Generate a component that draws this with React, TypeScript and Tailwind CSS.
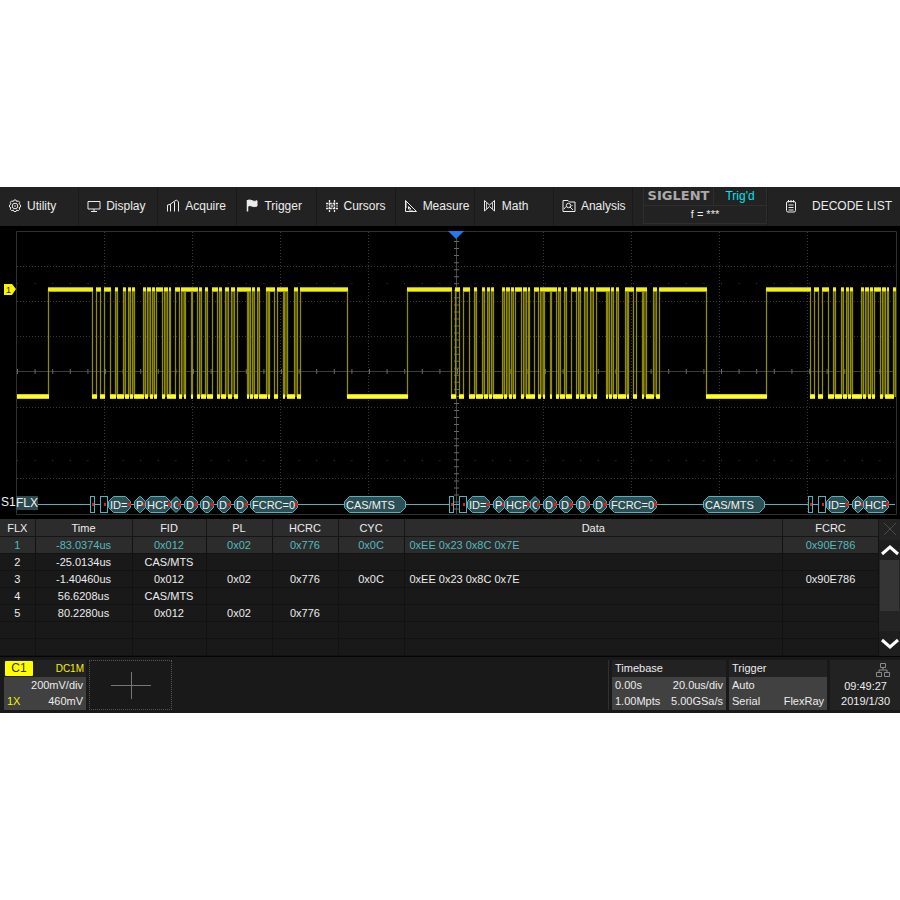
import type { ReactNode } from 'react';

const PERIOD = 359;

// high pulses of one FlexRay frame, as [start, end]
const PULSES: [number, number][] = [
  [48, 92], [96, 100], [104, 110], [115, 117], [123, 125], [128, 130], [132, 134],
  [143, 145], [147, 150], [152, 154], [156, 162], [164, 167], [169, 170], [175, 179],
  [181, 184], [185, 191], [192, 197], [199, 201], [205, 207], [212, 217], [219, 221],
  [225, 228], [231, 234], [237, 247], [248, 250], [252, 254], [257, 259], [266, 268],
  [269, 274], [277, 283], [284, 287], [294, 297], [300, 347],
];

const TRACE_START = 17;
const TRACE_END = 895;
const HIGH = 63;
const LOW = 171;

const TOKENS = [
  { x: 108, w: 23, text: 'ID=', dot: 129 },
  { x: 134, w: 12, text: 'P', dot: 144 },
  { x: 145, w: 26, text: 'HCR', dot: 169 },
  { x: 171, w: 10, text: 'C', dot: 179 },
  { x: 184, w: 14, text: 'D', dot: 196 },
  { x: 200, w: 14, text: 'D', dot: 212 },
  { x: 217, w: 14, text: 'D', dot: 229 },
  { x: 234, w: 14, text: 'D', dot: 246 },
  { x: 250, w: 48, text: 'FCRC=0', dot: 296 },
  { x: 344, w: 62, text: 'CAS/MTS', dot: 0 },
];

const COLUMNS = ['FLX', 'Time', 'FID', 'PL', 'HCRC', 'CYC', 'Data', 'FCRC'];

const ROWS = [
  ['1', '-83.0374us', '0x012', '0x02', '0x776', '0x0C', '0xEE 0x23 0x8C 0x7E', '0x90E786'],
  ['2', '-25.0134us', 'CAS/MTS', '', '', '', '', ''],
  ['3', '-1.40460us', '0x012', '0x02', '0x776', '0x0C', '0xEE 0x23 0x8C 0x7E', '0x90E786'],
  ['4', '56.6208us', 'CAS/MTS', '', '', '', '', ''],
  ['5', '80.2280us', '0x012', '0x02', '0x776', '', '', ''],
  ['', '', '', '', '', '', '', ''],
  ['', '', '', '', '', '', '', ''],
];

function Icon({ children }: { children: ReactNode }) {
  return (
    <svg width="14" height="14" viewBox="0 0 14 14" fill="none" stroke="currentColor" strokeWidth="1" className="shrink-0" aria-hidden="true">
      {children}
    </svg>
  );
}

const MENU = [
  {
    label: 'Utility',
    icon: (
      <Icon>
        <path d="M5.300 2.500L6 1h2l.7 1.500 1.600-.6 1.400 1.400-.6 1.600L12.500 6v2l-1.400.7.6 1.600-1.400 1.400-1.600-.6L8 12.500H6l-.7-1.400-1.600.6-1.400-1.400.6-1.600L1.500 8V6l1.400-1.100-.6-1.600 1.400-1.400z" />
        <circle cx="7" cy="7" r="2.800" />
        <circle cx="7" cy="7" r=".8" fill="currentColor" stroke="none" />
      </Icon>
    ),
  },
  {
    label: 'Display',
    icon: (
      <Icon>
        <path d="M1 2.500h12v7.500H1zM7 10v2.500M4 12.500h6" />
      </Icon>
    ),
  },
  {
    label: 'Acquire',
    icon: (
      <Icon>
        <path d="M1.500 12.500V6M4.500 12.500V5M8.500 12.500V3M12.500 12.500V3M1 6.500L4.500 5 8 2.500l2.500-1.500 2 2" />
      </Icon>
    ),
  },
  {
    label: 'Trigger',
    icon: (
      <Icon>
        <path d="M2.500 1v11.500" strokeWidth="1.500" />
        <path d="M2.500 1.500c1.500-.8 3-.5 4.500.2s3.500.8 5 0v5.300c-1.500.8-3.500.8-5 .1s-3-.6-4.500.2z" fill="currentColor" />
      </Icon>
    ),
  },
  {
    label: 'Cursors',
    icon: (
      <Icon>
        <path d="M4.500 1v12M9.500 1v12" strokeWidth="1.300" strokeDasharray="2.500 .8" />
        <path d="M1 4.500h12M1 9.500h12" strokeWidth="1.300" strokeDasharray="2.500 .8" />
        <path d="M7 5.500v3M1 7h2M11 7h2M5.500 7h3" strokeWidth=".8" />
      </Icon>
    ),
  },
  {
    label: 'Measure',
    icon: (
      <Icon>
        <path d="M1.500 1.500v11h11zM4.500 7.500V10H7zM1.500 4H3M1.500 6H3M1.500 8H3M6 12.500V11M8 12.500V11" />
      </Icon>
    ),
  },
  {
    label: 'Math',
    icon: (
      <Icon>
        <path d="M1.500 12V1.500L6.500 6l5-4.500V12L6.500 7.500z" />
        <path d="M3.500 10V4M9.500 10V4" strokeWidth=".8" />
      </Icon>
    ),
  },
  {
    label: 'Analysis',
    icon: (
      <Icon>
        <path d="M1 1.500h5l1.500 1.500H13V12.500H1z" />
        <circle cx="6.500" cy="6.500" r="2.200" />
        <path d="M8 8l3 3M2 10l2-2.500M9 7.500l1.500-1.500" />
      </Icon>
    ),
  },
];

function Toolbar() {
  return (
    <header className="flex h-[39px] bg-[#222222]">
      <nav className="grid flex-1 grid-cols-8">
        {MENU.map((item) => (
          <button key={item.label} className="flex items-center gap-[5px] border-r border-[#1a1a1a] pl-2 text-[12px]">
            {item.icon}
            {item.label}
          </button>
        ))}
      </nav>
      <div className="flex w-[267px] shrink-0">
        <div className="mb-[2px] ml-[10px] flex w-[124px] flex-col border border-t-0 border-[#2e2e2e]">
          <div className="flex h-[19px] border-b border-[#2e2e2e]">
            <div className="flex w-[70px] items-center justify-center border-r border-[#2e2e2e] font-['DejaVu_Sans'] text-[13px] font-bold text-[#aaaaaa]">
              SIGLENT
            </div>
            <div className="flex flex-1 items-center justify-center text-[12px] text-[#00e5f0]">Trig'd</div>
          </div>
          <div className="flex flex-1 items-center justify-center text-[11px]">f = ***</div>
        </div>
        <button className="flex flex-1 items-center gap-[14px] border-l border-[#1c1c1c] pl-4 text-[12px]">
          <Icon>
            <rect x="2.500" y="2.500" width="9" height="10.500" rx="1.500" />
            <path d="M4.500 1v2.500M7 1v2.500M9.500 1v2.500M4.500 6h5M4.500 8.500h5M4.500 11h5" />
          </Icon>
          DECODE LIST
        </button>
      </div>
    </header>
  );
}

function Grid() {
  const columns = [105, 193, 281, 369, 544, 632, 720, 808];
  const rows = [40, 75, 110, 181, 216, 252];
  return (
    <g fill="none" strokeWidth="1">
      <path d="M16.500 5.500H896.500V288.500H16.500z" stroke="#303030" />
      <g stroke="#383838" strokeDasharray="1 2">
        {columns.map((x) => <path key={x} d={`M${x - 0.5} 6V288`} />)}
        {rows.map((y) => <path key={y} d={`M17 ${y + 0.5}H896`} />)}
      </g>
      <path d="M17 145.500H896" stroke="#3c3c3c" />
      <path d="M17 145.500H896" stroke="#686868" strokeWidth="5" strokeDasharray="1 16.600" />
      <path d="M456.500 6V288" stroke="#484848" />
      <path d="M456.500 8V288" stroke="#686868" strokeWidth="5" strokeDasharray="1 6.040" />
      <path d="M17 57.500H896M17 234.500H896" stroke="#3a3a3a" strokeDasharray="1 16.600" />
    </g>
  );
}

function Trace() {
  const pulses = [0, 1, 2]
    .flatMap((n) => PULSES.map(([a, b]) => [a + n * PERIOD, b + n * PERIOD]))
    .filter(([a]) => a < TRACE_END)
    .map(([a, b]) => [a, Math.min(b, TRACE_END)]);
  const lows = pulses.map(([a], i) => [i === 0 ? TRACE_START : pulses[i - 1][1], a]);

  return (
    <g>
      {pulses.map(([a, b]) => (
        <g key={a}>
          {b - a < 4 && <rect x={a} y={HIGH} width={b - a} height={LOW - HIGH} fill="#565400" />}
          <path d={`M${a + 0.5} ${HIGH}V${LOW}M${b + 0.5} ${HIGH}V${LOW}`} stroke="#6e6b00" strokeOpacity=".35" strokeWidth="2" />
          <path d={`M${a + 0.5} ${HIGH}V${LOW}M${b + 0.5} ${HIGH}V${LOW}`} stroke="#8f8c08" strokeWidth="1" />
        </g>
      ))}
      {pulses.map(([a, b]) => (
        <g key={a}>
          <rect x={a} y={HIGH - 2} width={b - a + 1} height="5" fill="#a8a40a" />
          <rect x={a} y={HIGH - 1} width={b - a + 1} height="3" fill="#f2ef1e" />
        </g>
      ))}
      {lows.map(([a, b]) => (
        <g key={a}>
          <rect x={a} y={LOW - 3} width={b - a + 1} height="5" fill="#d0cc14" />
          <rect x={a} y={LOW - 2} width={b - a + 1} height="3" fill="#fffc2c" />
        </g>
      ))}
    </g>
  );
}

function Token({ x, w, text, dot }: { x: number; w: number; text: string; dot: number }) {
  const c = Math.min(5, w / 2 - 0.5);
  const r = w - 0.5;
  return (
    <g>
      <svg x={x} y="270" width={w} height="18">
        <path
          d={`M${0.5 + c} .5H${r - c}L${r} ${0.5 + c}V${16.5 - c}L${r - c} 16.5H${0.5 + c}L.5 ${16.5 - c}V${0.5 + c}z`}
          fill="#2a5055"
          stroke="#4fb4bb"
        />
      </svg>
      <svg x={x} y="270" width={w - 3} height="18">
        <text x="2" y="13" fontSize="11" fill="#f0f0f0">{text}</text>
      </svg>
      {dot > 0 && <rect x={dot - 1} y="277" width="3" height="3" fill="#ff1010" />}
    </g>
  );
}

function DecodeBus() {
  return (
    <g>
      <path d="M38 278.500H895" stroke="#4fb4bb" />
      {[0, 1, 2].map((n) => (
        <g key={n} transform={`translate(${n * PERIOD} 0)`}>
          <rect x="90.500" y="270.500" width="4" height="16" fill="#000" stroke="#4fb4bb" />
          <rect x="100.500" y="270.500" width="7" height="16" fill="#000" stroke="#4fb4bb" />
          <rect x="92" y="277" width="2" height="3" fill="#ff1010" />
          <rect x="104" y="277" width="2" height="3" fill="#ff1010" />
          {TOKENS.slice(0, n === 2 ? 3 : undefined).map((t) => <Token key={t.x} {...t} />)}
        </g>
      ))}
      <text x="1" y="280" fontSize="12" fill="#f0f0f0">S1</text>
      <rect x="16" y="270" width="22" height="14" fill="#2a4a4e" />
      <text x="16" y="281" fontSize="12" fill="#f0f0f0">FLX</text>
    </g>
  );
}

function Scope() {
  return (
    <svg viewBox="0 0 900 293" className="block w-full bg-black" role="img" aria-label="Channel 1 waveform">
      <Grid />
      <Trace />
      <path d="M448 5H464L456 13z" fill="#1e7be8" />
      <path d="M4 58H12L16 63 12 69H4z" fill="#f8f400" />
      <text x="6" y="67" fontSize="9" fill="#222">1</text>
      <DecodeBus />
    </svg>
  );
}

function DecodeTable() {
  return (
    <section className="flex bg-[#191919]">
      <table className="w-full flex-1 table-fixed border-collapse text-center text-[11px] leading-[16px]">
        <colgroup>
          <col className="w-[35px]" />
          <col className="w-[97px]" />
          <col className="w-[74px]" />
          <col className="w-[66px]" />
          <col className="w-[66px]" />
          <col className="w-[66px]" />
          <col />
          <col className="w-[96px]" />
        </colgroup>
        <thead>
          <tr className="h-[18px] bg-[#2c2c2c]">
            {COLUMNS.map((name) => (
              <th key={name} className="border-r border-b border-[#161616] p-0 font-normal">{name}</th>
            ))}
          </tr>
        </thead>
        <tbody>
          {ROWS.map((row, i) => (
            <tr key={i} className={i === 0 ? 'h-[17px] bg-[#2c2c2c] text-[#55b9bf]' : 'h-[17px]'}>
              {row.map((cell, j) => (
                <td
                  key={j}
                  className={j === 6 ? 'border-r border-b border-[#121212] p-0 pl-[5px] text-left' : 'border-r border-b border-[#121212] p-0'}
                >
                  {cell}
                </td>
              ))}
            </tr>
          ))}
        </tbody>
      </table>
      <div className="flex w-[21px] shrink-0 flex-col bg-[#1e1e1e]">
        <button aria-label="Close list" className="flex h-[21px] items-center justify-center bg-[#232323] text-[#4a4a4a]">
          <Icon><path d="M1 1l12 12M13 1L1 13" /></Icon>
        </button>
        <button aria-label="Scroll up" className="flex h-5 items-center justify-center">
          <svg width="18" height="12" viewBox="0 0 18 12" fill="none" stroke="#fff" strokeWidth="3"><path d="M1 10l8-7 8 7" /></svg>
        </button>
        <div className="flex-1 bg-[#242424]">
          <div className="mx-[1px] h-[51px] bg-[#353535]" />
        </div>
        <button aria-label="Scroll down" className="flex h-[25px] items-center justify-center">
          <svg width="18" height="12" viewBox="0 0 18 12" fill="none" stroke="#fff" strokeWidth="3"><path d="M1 2l8 7 8-7" /></svg>
        </button>
      </div>
    </section>
  );
}

function StatusBar() {
  return (
    <footer className="flex h-[57px] border-t border-[#050505] bg-[#191919] pt-[3px] pb-[3px] text-[11px] leading-[16px]">
      <div className="ml-1 flex w-[82px] flex-col bg-[#222222]">
        <div className="flex h-[17px] items-center justify-between pr-[2px]">
          <span className="ml-[1px] w-[28px] rounded-[1px] bg-[#ffff00] text-center text-[12px] leading-[15px] text-[#333300]">C1</span>
          <span className="text-[10px] text-[#f4f400]">DC1M</span>
        </div>
        <div className="flex-1 bg-[#414141] px-[3px] text-right">
          <div>200mV/div</div>
          <div className="flex justify-between">
            <span className="text-[#f4f400]">1X</span>
            <span>460mV</span>
          </div>
        </div>
      </div>
      <button aria-label="Add channel" className="ml-[3px] flex w-[83px] items-center justify-center border border-dotted border-[#555555]">
        <svg width="42" height="28" viewBox="0 0 42 28" stroke="#777777"><path d="M1 14.500H41M21.500 1V28" /></svg>
      </button>
      <div className="ml-auto flex">
        <div className="mr-[3px] w-[1px] bg-[#303030]" />
        <section className="w-[114px] bg-[#222222]">
          <h2 className="h-[17px] pl-[3px]">Timebase</h2>
          <div className="h-[33px] bg-[#414141] px-[3px]">
            <div className="flex justify-between"><span>0.00s</span><span>20.0us/div</span></div>
            <div className="flex justify-between"><span>1.00Mpts</span><span>5.00GSa/s</span></div>
          </div>
        </section>
        <section className="ml-[3px] w-[98px] bg-[#222222]">
          <h2 className="h-[17px] pl-[3px]">Trigger</h2>
          <div className="h-[33px] bg-[#414141] px-[3px]">
            <div>Auto</div>
            <div className="flex justify-between"><span>Serial</span><span>FlexRay</span></div>
          </div>
        </section>
        <div className="ml-[3px] flex w-[70px] flex-col items-end bg-[#222222] pt-[3px] pr-[10px]">
          <svg width="14" height="14" viewBox="0 0 14 14" fill="none" stroke="#8a8a8a" aria-hidden="true">
            <path d="M4.500.5h5v4h-5zM.5 9.500h5v4h-5zM8.500 9.500h5v4h-5zM7 4.500V7M3 9.500V7h8v2.500" />
          </svg>
          <div className="pr-[3px] leading-[18px]">09:49:27</div>
          <div className="leading-[12px]">2019/1/30</div>
        </div>
      </div>
    </footer>
  );
}

export default function App() {
  return (
    <div className="flex min-h-screen items-center bg-white">
      <main className="w-full bg-[#111111] font-['Liberation_Sans',Arial,sans-serif] text-[#ececec]">
        <Toolbar />
        <Scope />
        <DecodeTable />
        <StatusBar />
      </main>
    </div>
  );
}
